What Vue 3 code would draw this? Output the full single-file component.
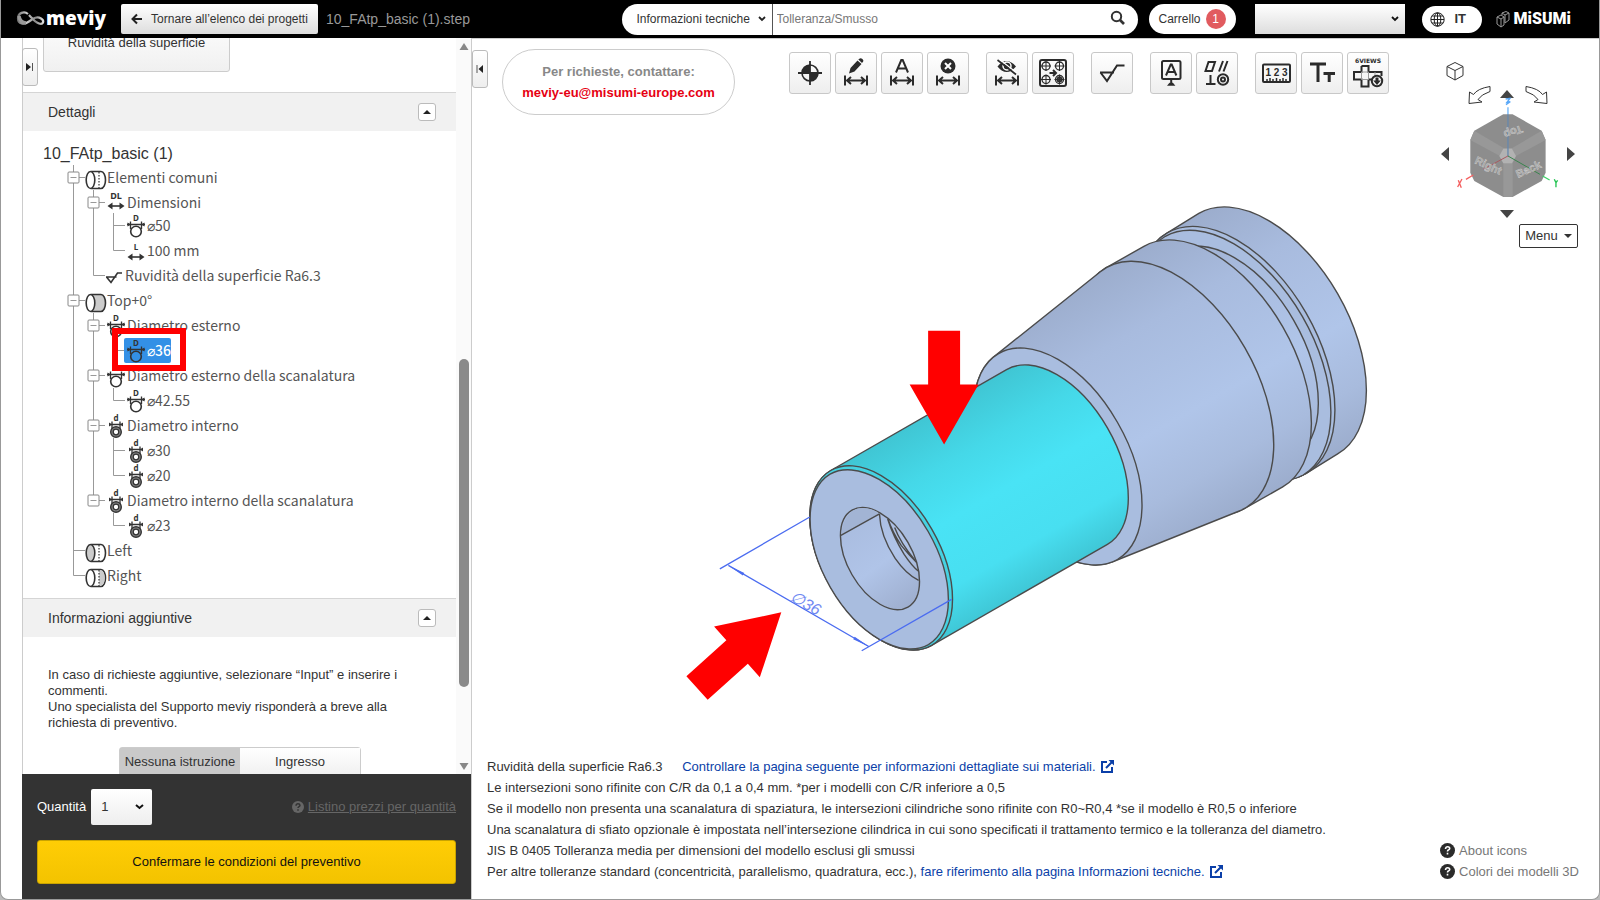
<script setup>
import { ref } from 'vue'

const category = ref('tech')
const quantity = ref('1')
const query = ref('')

/* ---- toolbar ---- */
const dim = '<path d="M10 23.5v10M32 23.5v10M12 28.5h18M16 25l-4 3.5 4 3.5M26 25l4 3.5-4 3.5"/>'
const letterA = '<path d="M15 20.500L20.300 8h1.400L27 20.500M17 16.500h8"/>'
const target = (x, y) => `<circle cx="${x}" cy="${y}" r="4" stroke-width="1.300"/><path stroke-width="1" d="M${x - 5} ${y}h10M${x} ${y - 5}v10"/>`
const toolGroups = [
  [
    { name: 'Origine', art: '<circle cx="21" cy="21" r="8" stroke-width="1.600"/><path d="M21 9v24M9 21h24" stroke-width="1.800"/><path fill="#2b2b2b" stroke="none" d="M21 21v-8a8 8 0 0 0-8 8zM21 21v8a8 8 0 0 0 8-8z"/>' },
    { name: 'Modifica quota', art: dim + '<path fill="#2b2b2b" stroke="none" d="M14 21.500l1.500-5.500 7-7.500 4 3.500-7 7.500zM23.300 7.600l1.500-1.200q1.200-.6 2.600.5 1.500 1.300.8 2.700l-1.200 1.500z"/>' },
    { name: 'Testo quota', art: dim + letterA },
    { name: 'Elimina quota', art: dim + '<circle cx="21" cy="14" r="7.500" fill="#2b2b2b" stroke="none"/><path stroke="#fff" d="M18 11l6 6M24 11l-6 6"/>' },
  ],
  [
    { name: 'Nascondi quota', art: dim + '<path fill="#2b2b2b" stroke="none" d="M11.500 14.500q9-11 18.500 0-9.500 11-18.500 0z"/><circle cx="21" cy="14" r="4" stroke="#fff" stroke-width="1.500"/><path stroke="#fff" stroke-width="1.300" d="M13.500 7.500L31 21"/><path stroke-width="1.600" d="M11.500 8L30 22.500"/>' },
    { name: 'Raggruppa fori', art: '<rect x="8" y="8" width="26" height="26" rx="2"/>' + target(14, 14) + target(27.5, 14) + target(14, 27.5) + target(27.5, 27.5) + '<circle cx="27.500" cy="27.500" r="2" /><path d="M17.500 21h6M21 18l3 3-3 3"/>' },
  ],
  [{ name: 'Rugosità', art: '<path d="M9 20.500h14M9.500 20.500l6.500 8.500 10-15.500h7.500"/>' }],
  [
    { name: 'Annotazione', art: '<rect x="12" y="9" width="18.500" height="18" rx="1.500"/><path d="M16 23.500l4.700-11h1l4.700 11M17.500 20h7.500M21.200 27v6"/><path fill="#2b2b2b" stroke="none" d="M17 33.800l2.500-3h3.400l2.500 3z"/>' },
    { name: 'Tolleranze geometriche', art: '<path d="M12.500 10h6.500l-3 9h-6.500zM27 9l-4 10.500M31.500 9l-4 10.500M14.500 23v9M10 32h9.500"/><circle cx="27" cy="27.500" r="5.200"/><circle cx="27" cy="27.500" r="2"/>' },
  ],
  [
    { name: 'Misura', art: '<rect x="8" y="12.500" width="27" height="17.500" rx="1"/><path stroke-width="1.500" d="M12 30v-3M15 30v-4M18 30v-3M21.500 30v-4M25 30v-3M28 30v-4M31 30v-3"/><text x="21.500" y="24" text-anchor="middle" font-size="10" font-weight="700" font-family="Liberation Sans, sans-serif" fill="#2b2b2b" stroke="none">1 2 3</text>' },
    { name: 'Dimensione testo', art: '<path stroke-width="3" d="M9 12h16M17 12v18"/><path stroke-width="3" d="M22.500 21.500h11.500M28.200 21.500V30"/>' },
    { name: 'Sei viste', art: '<text x="21" y="11" text-anchor="middle" font-size="6" font-weight="700" font-family="DejaVu Sans, sans-serif" fill="#2b2b2b" stroke="none">6VIEWS</text><path d="M14.500 14h7v6h13v4M14.500 14v6H7v7.500h7.500V34.500h7V27.500M21.500 27.500h3"/><path stroke="#999" stroke-width="1" d="M14.500 20h7v7.500h-7zM28 20v4"/><circle cx="30" cy="29" r="5.200" fill="#f6f6f6"/><path fill="#2b2b2b" stroke="none" d="M28.500 25.500h3v3h2.300L30 33l-3.800-4.500h2.300z"/>' },
  ],
]

/* ---- feature tree ---- */
const barrel = (left, right, inner) => `<path d="M6 6.500h10c2.700 0 4.500 4 4.500 8.500s-1.800 8.500-4.500 8.500H6" fill="${right}"/><ellipse cx="5.500" cy="15" rx="4.300" ry="8.500" fill="${left}"/>${inner}`
const dash = '<path stroke-dasharray="1.500 1.500" stroke-width="1.200" d="M14 7v16"/>'
const cap = (t, y = 8, size = 8) => `<text x="11" y="${y}" text-anchor="middle" font-size="${size}" font-weight="700" font-family="Noto Sans, sans-serif" fill="#333" stroke="none">${t}</text>`
const gauge = '<path stroke-width="1.300" d="M2 11.500h18M5.500 8.500V16M16.500 8.500V16"/><path fill="#333" stroke="none" d="M6 11.500l-3.500-2v4zM16 11.500l3.500-2v4z"/>'
const hArrow = (y) => `<path d="M5 ${y}h12"/><path fill="#333" stroke="none" d="M2.500 ${y}l5-3.500v7zM19.500 ${y}l-5-3.500v7z"/>`
const glyphs = {
  common: barrel('#fff', '#fff', dash),
  top: barrel('#fff', '#ccc', ''),
  left: barrel('#ccc', '#fff', dash),
  right: barrel('#fff', '#fff', '<path fill="#ccc" stroke="none" d="M14 7.500h2c2.500 0 3.700 4 3.700 7.500s-1.200 7.500-3.700 7.500h-2z"/>' + dash),
  dl: cap('DL', 9, 9) + hArrow(16),
  outer: cap('D') + gauge + '<circle cx="11" cy="18.500" r="5.300" stroke-width="1.600"/>',
  inner: cap('d') + '<path stroke-width="1.300" d="M4 11.500h14M7 8.500V16M15 8.500V16"/><path fill="#333" stroke="none" d="M7 11.500l-3-2v4zM15 11.500l3-2v4z"/><circle cx="11" cy="19" r="4" stroke="#888" stroke-width="2.500"/><circle cx="11" cy="19" r="5.300" stroke-width="1.400"/><circle cx="11" cy="19" r="2.800" stroke-width="1.300"/>',
  length: cap('L', 12) + hArrow(19),
  rough: '<path d="M1 14h10.500M1.500 14l4.500 5.500L12.500 10h4.500"/>',
}
const rows = [
  { g: '+', box: true, icon: 'common', label: 'Elementi comuni' },
  { g: '|+', box: true, icon: 'dl', label: 'Dimensioni', short: true },
  { g: '||+', icon: 'outer', label: '⌀50' },
  { g: '||L', icon: 'length', label: '100 mm' },
  { g: '|L', icon: 'rough', label: 'Ruvidità della superficie Ra6.3', narrow: true },
  { g: '+', box: true, icon: 'top', label: 'Top+0°' },
  { g: '|+', box: true, icon: 'outer', label: 'Diametro esterno' },
  { g: '||L', icon: 'outer', label: '⌀36', selected: true },
  { g: '|+', box: true, icon: 'outer', label: 'Diametro esterno della scanalatura' },
  { g: '||L', icon: 'outer', label: '⌀42.55' },
  { g: '|+', box: true, icon: 'inner', label: 'Diametro interno' },
  { g: '||+', icon: 'inner', label: '⌀30' },
  { g: '||L', icon: 'inner', label: '⌀20' },
  { g: '|L', box: true, icon: 'inner', label: 'Diametro interno della scanalatura' },
  { g: '| L', icon: 'inner', label: '⌀23' },
  { g: '+', icon: 'left', label: 'Left' },
  { g: 'L', icon: 'right', label: 'Right' },
]
function guides(row) {
  let d = ''
  for (let i = 0; i < row.g.length; i++) {
    const x = i * 20 + 9.5
    const c = row.g[i]
    if (c === '|' || c === '+') d += `M${x} 0V25`
    if (c === 'L') d += `M${x} 0V12.5`
    if (c === '+' || c === 'L') d += `M${x} 12.5h11.5`
  }
  return d
}

/* ---- model geometry: circles seen in isometric projection ---- */
const K = 0.577
const COS = 0.5
const SIN = 0.866
const toScreen = (c, u, v) => `${(c[0] + u * SIN + v * COS).toFixed(1)} ${(c[1] - u * COS + v * SIN).toFixed(1)}`
function solid(c1, r1, c2, r2) {
  const d = Math.hypot(c2[0] - c1[0], c2[1] - c1[1]) / K
  const s = (r1 - r2) / d
  const c = Math.sqrt(1 - s * s)
  const p = (o, r, side) => toScreen(o, r * K * s, side * r * c)
  const arc = (r, large) => `A${r} ${(r * K).toFixed(1)} 60 ${large ? 1 : 0} 1 `
  return `M${p(c1, r1, -1)}L${p(c2, r2, -1)}${arc(r2, r2 > r1)}${p(c2, r2, 1)}L${p(c1, r1, 1)}${arc(r1, r1 > r2)}${p(c1, r1, -1)}Z`
}
const disc = (c, r) => `M${toScreen(c, 0, -r)}A${r} ${r * K} 60 0 1 ${toScreen(c, 0, r)}A${r} ${r * K} 60 0 1 ${toScreen(c, 0, -r)}Z`
const parts = [
  { d: solid([1237, 352.5], 139, [1268.5, 333], 139), fill: 'url(#steel)' },
  { d: disc([1237, 352.5], 139), fill: '#a9bddf' },
  { d: disc([1234.5, 355], 138), fill: '#a9bddf' },
  { d: solid([1213.5, 366], 119, [1234.5, 354], 119), fill: 'url(#steel)' },
  { d: solid([1175.5, 387.5], 139, [1213.5, 366], 139), fill: 'url(#steel)' },
  { d: solid([1058, 456], 119, [1175.5, 387.5], 139), fill: 'url(#steel)' },
  { d: disc([1058, 456], 119), fill: '#a9bddf' },
  { d: solid([881, 557.5], 101, [1057, 456.5], 101), fill: 'url(#cyan)' },
  { d: disc([881, 557.5], 101), fill: '#45d2e2' },
  { d: disc([879, 559], 98.5), fill: '#a9bddf' },
  { d: disc([879.8, 558.2], 56), fill: 'url(#bore)' },
]
</script>

<template>
  <div class="app">
    <header class="top">
      <div class="brand">
        <svg width="30" height="20" viewBox="0 0 30 20" fill="none">
          <defs><linearGradient id="loop"><stop offset="0" stop-color="#777" /><stop offset=".35" stop-color="#ccc" /><stop offset=".7" stop-color="#888" /><stop offset="1" stop-color="#ddd" /></linearGradient></defs>
          <path d="M12 5C8 1.500 2 4 2 9.500S8 16 13 12.500 21 7 25 9.500 27 16 23 14.500 17 10 13 6" stroke="url(#loop)" stroke-width="2.200" />
          <path d="M3 7q1 6.500 7 7" stroke="#999" stroke-width="3.400" />
        </svg>
        <span>meviy</span>
      </div>
      <button class="back" type="button">
        <svg width="12" height="12" viewBox="0 0 12 12"><path d="M11 6H2M6 1.500L1.500 6 6 10.500" fill="none" stroke="#222" stroke-width="2" /></svg>
        Tornare all’elenco dei progetti
      </button>
      <span class="file">10_FAtp_basic (1).step</span>
      <form class="search" @submit.prevent>
        <div class="pick">
          <select v-model="category" aria-label="Categoria"><option value="tech">Informazioni tecniche</option></select>
          <svg width="8" height="6" viewBox="0 0 8 6"><path d="M1 1l3 3 3-3" fill="none" stroke="#222" stroke-width="1.800" /></svg>
        </div>
        <input v-model="query" type="text" placeholder="Tolleranza/Smusso" aria-label="Cerca">
        <button type="submit" aria-label="Cerca">
          <svg width="16" height="16" viewBox="0 0 16 16" fill="none" stroke="#333"><circle cx="6.500" cy="6.500" r="4.700" stroke-width="2" /><path d="M10 10l4 4" stroke-width="2.600" /></svg>
        </button>
      </form>
      <button class="cart" type="button">Carrello <b>1</b></button>
      <div class="pick account">
        <select aria-label="Account"><option></option></select>
        <svg width="8" height="6" viewBox="0 0 8 6"><path d="M1 1l3 3 3-3" fill="none" stroke="#111" stroke-width="1.800" /></svg>
      </div>
      <button class="lang" type="button">
        <svg width="15" height="15" viewBox="0 0 15 15" fill="none" stroke="#222" stroke-width="1"><circle cx="7.500" cy="7.500" r="6.700" /><ellipse cx="7.500" cy="7.500" rx="3.300" ry="6.700" /><path d="M7.500 1v13M1 7.500h13M2 4h11M2 11h11" /></svg>
        IT
      </button>
      <div class="misumi">
        <svg width="14" height="17" viewBox="0 0 14 17" fill="none" stroke="#999" stroke-width="1"><path d="M1 6l4-2 3 2v8l-3 2-4-3zM1 6l4 2 3-2M5 8v8M6 4V2l4-1.500 3 1.500v7l-4 3M9 4l4-2M6 2l3 2v8" /></svg>
        <span>MiSUMi</span>
      </div>
    </header>

    <main class="work">
      <aside class="side">
        <button class="tab tab-left" type="button" aria-label="Espandi">
          <svg width="8" height="8" viewBox="0 0 8 8"><path d="M0 0l5 4-5 4z" fill="#222" /><path d="M6.500 0v8" stroke="#555" /></svg>
        </button>
        <div class="scroll">
          <div class="content">
            <div class="lead"><button type="button">Ruvidità della superficie</button></div>
            <section>
              <h2>Dettagli <button type="button" aria-label="Comprimi Dettagli"><svg width="8" height="4" viewBox="0 0 8 4"><path d="M0 4l4-4 4 4z" fill="#222" /></svg></button></h2>
              <div class="tree">
                <div class="root">10_FAtp_basic (1)</div>
                <ul>
                  <li v-for="(row, i) in rows" :key="i" :class="{ selected: row.selected, short: row.short }">
                    <svg :class="'gutter g' + row.g.length" height="25" fill="none" stroke="#999">
                      <path :d="guides(row)" />
                      <g v-if="row.box" :class="'b' + row.g.length">
                        <rect x="4" y="7" width="11" height="11" rx="1" fill="#fff" stroke="#888" /><path d="M6.500 12.500h6" />
                      </g>
                    </svg>
                    <span class="node">
                      <svg class="glyph" :class="{ narrow: row.narrow }" height="25" fill="none" stroke="#333" stroke-width="1.600" v-html="glyphs[row.icon]"></svg>
                      <span>{{ row.label }}</span>
                    </span>
                  </li>
                </ul>
              </div>
            </section>
            <section>
              <h2>Informazioni aggiuntive <button type="button" aria-label="Comprimi Informazioni aggiuntive"><svg width="8" height="4" viewBox="0 0 8 4"><path d="M0 4l4-4 4 4z" fill="#222" /></svg></button></h2>
              <p>In caso di richieste aggiuntive, selezionare “Input” e inserire i commenti.<br>Uno specialista del Supporto meviy risponderà a breve alla richiesta di preventivo.</p>
              <div class="segment"><button class="on" type="button">Nessuna istruzione</button><button type="button">Ingresso</button></div>
            </section>
          </div>
          <div class="bar">
            <svg width="10" height="7" viewBox="0 0 10 7"><path d="M5 0l4.500 7h-9z" fill="#888" /></svg>
            <div class="rail"><div class="thumb"></div></div>
            <svg width="10" height="7" viewBox="0 0 10 7"><path d="M5 7L.5 0h9z" fill="#888" /></svg>
          </div>
        </div>
        <div class="order">
          <div class="qty">
            <label for="qty">Quantità</label>
            <div class="pick">
              <select id="qty" v-model="quantity"><option>1</option></select>
              <svg width="9" height="6" viewBox="0 0 9 6"><path d="M1 1l3.500 3L8 1" fill="none" stroke="#111" stroke-width="2" /></svg>
            </div>
            <svg class="help" width="12" height="12" viewBox="0 0 12 12"><circle cx="6" cy="6" r="6" fill="#666" /><path d="M4 4.700q.2-2 2-2t2 1.600q0 1-1.200 1.500Q6 6.200 6 7M6 8.200v1.500" fill="none" stroke="#333" stroke-width="1.500" /></svg>
            <a href="#">Listino prezzi per quantità</a>
          </div>
          <button class="confirm" type="button">Confermare le condizioni del preventivo</button>
        </div>
      </aside>

      <section class="viewer">
        <button class="tab tab-right" type="button" aria-label="Comprimi">
          <svg width="8" height="8" viewBox="0 0 8 8"><path d="M7 0L2.500 4 7 8z" fill="#222" /><path d="M1 0v8" stroke="#555" /></svg>
        </button>

        <svg class="model" viewBox="472 38 1127 861" fill="none">
          <defs>
            <linearGradient id="steel" gradientUnits="userSpaceOnUse" x1="1106" y1="267" x2="1245" y2="508">
              <stop offset="0" stop-color="#9cadcd" /><stop offset=".25" stop-color="#a8bbde" /><stop offset=".6" stop-color="#b0c5e9" /><stop offset=".82" stop-color="#a8bbdd" /><stop offset="1" stop-color="#9cadcd" />
            </linearGradient>
            <linearGradient id="cyan" gradientUnits="userSpaceOnUse" x1="919" y1="420" x2="1020" y2="595">
              <stop offset="0" stop-color="#40c6d4" /><stop offset=".25" stop-color="#45d8e8" /><stop offset=".5" stop-color="#49e3f5" /><stop offset=".8" stop-color="#48dff1" /><stop offset="1" stop-color="#3fc7d6" />
            </linearGradient>
            <linearGradient id="bore" gradientUnits="userSpaceOnUse" x1="848" y1="520" x2="912" y2="608">
              <stop offset="0" stop-color="#a9bcdf" /><stop offset=".5" stop-color="#b0c4e8" /><stop offset="1" stop-color="#9dadcd" />
            </linearGradient>
          </defs>
          <g stroke="#4b4b4b" stroke-width="1.400" stroke-linejoin="round">
            <path v-for="(part, i) in parts" :key="i" :d="part.d" :fill="part.fill" />
            <path d="M841 534.500Q843 514 856 508.500Q868 505 879 513Z" fill="#a2b4d4" stroke="none" />
            <path d="M840.700 535L879.300 513.500M879.300 513.500Q880 535 895 558Q906 574 918.500 580M887.500 518.500Q893 536 904 554Q912 566 918 570.500M888 519Q892 531 901 545Q909 555 916.500 562M894.500 527Q900 542 915 560" />
          </g>
          <g stroke="#4b6cf0" stroke-width="1.300">
            <path d="M719.500 568.500L809.500 516.500M728 565L869 646.500M861.500 650.500L951.500 599" />
            <path fill="#4b6cf0" stroke="none" d="M728 565l16 7.500-1.500 2.500zM869 646.500l-16-7.500 1.500-2.500z" />
          </g>
          <text x="0" y="0" transform="translate(789 600) rotate(29)" class="dia">∅36</text>
          <path fill="#f00" d="M928 330h32v54h18.500L944 444l-34.500-60H928zM781 612l-21.500 65-12-13.500-40.200 36L686 676l40-36-12.300-13.700z" />
        </svg>

        <div class="contact">
          <span>Per richieste, contattare:</span>
          <a href="mailto:meviy-eu@misumi-europe.com">meviy-eu@misumi-europe.com</a>
        </div>

        <div class="tools">
          <div v-for="(group, gi) in toolGroups" :key="gi" class="group">
            <button v-for="tool in group" :key="tool.name" type="button" :aria-label="tool.name">
              <svg width="42" height="42" viewBox="0 0 42 42" fill="none" stroke="#2b2b2b" stroke-width="2" v-html="tool.art"></svg>
            </button>
          </div>
        </div>

        <div class="orient">
          <svg width="150" height="166" viewBox="1435 58 150 166" fill="none">
            <path d="M1455 62.500l8 4v9l-8 4.500-8-4.500v-9zM1447 66.500l8 4 8-4M1455 70.500V80" stroke="#333" />
            <path d="M1490 86.500v5q-9 3-12 8l4 2.500-13 1.500.5-11.500 4 2.500q4-6 16.500-8zM1526 86.500v5q9 3 12 8l-4 2.500 13 1.500-.5-11.500-4 2.500q-4-6-16.500-8z" stroke="#333" />
            <path fill="#444" d="M1507 90l7 8h-14zM1507 218l7-8h-14zM1441 154l8-7v14zM1575 154l-8-7v14z" />
            <g transform="translate(1140 0) scale(.3333)">
              <path d="M1090 343h28l87 49 12 28v98l-12 25-87 48h-28l-87-48-12-25v-98l12-28z" fill="#8d8d8d" />
              <path d="M1003 392l88 52h26l88-52 12 28-89 48v0l-10 22v101h-28V490l-10-22-89-48z" fill="#989898" />
              <path d="M1090 446h26l12 22-12 22h-26l-12-22z" fill="#b2b2b2" />
              <path d="M1104 322V343" stroke="#6fb4f8" stroke-width="4" /><path d="M1104 343V468" stroke="#6888ac" stroke-width="4" />
              <path d="M1104 468L1030 508" stroke="#a95960" stroke-width="3" /><path d="M1000 525L978 538" stroke="#f45f5f" stroke-width="4" />
              <path d="M1104 468L1200 523" stroke="#39844d" stroke-width="3" /><path d="M1208 528L1229 540" stroke="#3bcf66" stroke-width="4" />
              <path d="M1097 297l13-2-9 12 10-2-13 9" stroke="#59a8f8" stroke-width="4" />
              <path d="M955 541l9 22M966 537l-13 24" stroke="#f45f5f" stroke-width="4" />
              <path d="M1243 538l5 10 5-7M1248 548v14" stroke="#22c351" stroke-width="4" />
            </g>
            <g class="faces"><text transform="translate(1521 125) rotate(160)">Top</text><text transform="translate(1474 163) rotate(25)">Right</text><text transform="translate(1518 178) rotate(-24)">Back</text></g>
          </svg>
          <button type="button">Menu <svg width="8" height="4" viewBox="0 0 8 4"><path d="M0 0h8L4 4z" fill="#333" /></svg></button>
        </div>

        <footer class="foot">
          <div class="notes">
            <div>Ruvidità della superficie Ra6.3 <a class="first" href="#">Controllare la pagina seguente per informazioni dettagliate sui materiali. <svg width="13" height="13" viewBox="0 0 13 13"><path d="M6 2H1v10h10V7M5 8l6-6" fill="none" stroke="#0b3fa8" stroke-width="2" /><path d="M7.500 0H13v5.500z" fill="#0b3fa8" /></svg></a></div>
            <div>Le intersezioni sono rifinite con C/R da 0,1 a 0,4 mm. *per i modelli con C/R inferiore a 0,5</div>
            <div>Se il modello non presenta una scanalatura di spaziatura, le intersezioni cilindriche sono rifinite con R0~R0,4 *se il modello è R0,5 o inferiore</div>
            <div>Una scanalatura di sfiato opzionale è impostata nell’intersezione cilindrica in cui sono specificati il trattamento termico e la tolleranza del diametro.</div>
            <div>JIS B 0405 Tolleranza media per dimensioni del modello esclusi gli smussi</div>
            <div>Per altre tolleranze standard (concentricità, parallelismo, quadratura, ecc.), <a href="#">fare riferimento alla pagina Informazioni tecniche. <svg width="13" height="13" viewBox="0 0 13 13"><path d="M6 2H1v10h10V7M5 8l6-6" fill="none" stroke="#0b3fa8" stroke-width="2" /><path d="M7.500 0H13v5.500z" fill="#0b3fa8" /></svg></a></div>
          </div>
          <div class="links">
            <a v-for="text in ['About icons', 'Colori dei modelli 3D']" :key="text" href="#">
              <svg width="15" height="15" viewBox="0 0 15 15"><circle cx="7.500" cy="7.500" r="7.500" fill="#2b2b2b" /><path d="M5.500 6q.2-2.200 2.200-2.200t2 1.700q0 1-1.300 1.500-.9.400-.9 1.500M7.500 9.700v1.800" fill="none" stroke="#fff" stroke-width="1.600" /></svg>
              {{ text }}
            </a>
          </div>
        </footer>
      </section>
    </main>
  </div>
</template>

<style>
body { margin: 0; background: #bbb; }
</style>

<style scoped>
.app { box-sizing: border-box; height: 100vh; display: flex; flex-direction: column; overflow: hidden; background: #fff; border: 1px solid #999; border-top: 0; border-radius: 0 0 8px 8px; font: 13px/16px "Liberation Sans", Arial, sans-serif; color: #333; }
button, select, input { font: inherit; color: inherit; box-sizing: border-box; margin: 0; padding: 0; border: 0; border-radius: 0; background: none; }
svg { flex: none; }
a { text-decoration: none; }

.top { flex: none; height: 38px; display: flex; align-items: center; background: #000; font-size: 12px; }
.brand { width: 105px; margin-left: 15px; display: flex; align-items: center; color: #fff; font: 800 19px/30px "Open Sans", sans-serif; }
.brand span { margin-top: -2px; }
.back { height: 30px; width: 197px; display: flex; align-items: center; justify-content: center; gap: 8px; border-radius: 2px; background: linear-gradient(#fff, #ddd); white-space: nowrap; }
.file { margin-left: 8px; font-size: 14px; color: #999; white-space: nowrap; }
.pick { position: relative; }
.pick select { width: 100%; height: 100%; appearance: none; }
.pick svg { position: absolute; right: 6px; top: 50%; margin-top: -3px; pointer-events: none; }
.search { flex: none; margin-left: auto; width: 516px; height: 31px; display: flex; background: #fff; border-radius: 16px; overflow: hidden; }
.search .pick { width: 150px; border-right: 1px solid #555; }
.search select { padding-left: 15px; }
.search input { flex: 1; padding-left: 4px; outline: 0; }
.search input::placeholder { color: #777; opacity: 1; }
.search > button { width: 40px; display: flex; align-items: center; justify-content: center; padding-bottom: 3px; }
.cart { margin-left: 11px; width: 87px; height: 30px; display: flex; align-items: center; justify-content: center; gap: 5px; border-radius: 15px; background: #fff; }
.cart b { width: 20px; line-height: 20px; border-radius: 10px; background: #e15b5f; color: #fff; font-weight: 400; }
.account { margin-left: 19px; width: 150px; height: 30px; background: linear-gradient(#fff, #ddd); }
.lang { margin-left: 17px; width: 60px; height: 27px; display: flex; align-items: center; gap: 10px; padding-left: 8px; border-radius: 14px; background: #fff; font-size: 13px; font-weight: 700; }
.misumi { margin: 0 28px 0 14px; display: flex; align-items: center; gap: 4px; color: #fff; font: 900 16px/20px Roboto, sans-serif; }

.work { flex: 1; min-height: 0; display: flex; }
.side { position: relative; flex: none; box-sizing: border-box; width: 450px; margin-left: 21px; display: flex; flex-direction: column; border-left: 1px solid #ccc; border-right: 1px solid #ccc; }
.scroll { flex: 1; min-height: 0; display: flex; overflow: hidden; }
.content { flex: 1; min-width: 0; }
.bar { width: 15px; display: flex; flex-direction: column; align-items: center; padding: 5px 0 4px; box-sizing: border-box; background: #fafafa; }
.rail { flex: 1; width: 10px; display: flex; flex-direction: column; justify-content: flex-end; }
.thumb { height: 46%; margin-bottom: 76px; border-radius: 5px; background: #8a8a8a; }
.tab { position: absolute; z-index: 2; width: 16px; height: 38px; display: flex; align-items: center; justify-content: center; border: 1px solid #bbb; border-radius: 3px; background: linear-gradient(#fff, #eee); }
.tab-left { left: -1px; top: 10px; }
.tab-right { left: 0; top: 11px; }
.lead { padding: 0 0 20px 20px; margin-top: -24px; }
.lead button { display: block; width: 187px; height: 58px; border: 1px solid #ccc; border-radius: 3px; background: linear-gradient(#fff, #f0f0f0); }
h2 { margin: 0; height: 39px; box-sizing: border-box; padding: 0 20px 0 25px; display: flex; align-items: center; justify-content: space-between; border-top: 1px solid #d5d5d5; background: #f1f1f1; font-size: 14px; font-weight: 400; }
h2 button { width: 18px; height: 18px; display: flex; align-items: center; justify-content: center; border: 1px solid #bbb; border-radius: 3px; background: #fff; }
.tree { padding: 12px 0 10px; }
.root { padding-left: 20px; font-size: 16px; line-height: 22px; }
ul { list-style: none; margin: 0; padding: 0 0 0 41px; }
li { height: 25px; display: flex; white-space: nowrap; font: 14px/25px "Noto Sans CJK JP", "Noto Sans CJK SC", sans-serif; color: #555; }
li.short { height: 23px; }
.gutter { overflow: visible; }
.g1 { width: 20px; }
.g2 { width: 40px; }
.g3 { width: 60px; }
.b2 { transform: translate(20px, 0); }
.node { position: relative; display: flex; height: 25px; padding-left: 1px; }
.glyph { width: 22px; overflow: visible; }
.glyph.narrow { width: 20px; }
.selected .node { background: #3390e6; border-radius: 2px; color: #fff; font-weight: 500; }
.selected .node::after { content: ""; position: absolute; z-index: 1; left: -12px; top: -10px; width: 62px; height: 31px; border: 6px solid #f00; }
p { margin: 30px 50px 16px 25px; }
.segment { width: 242px; height: 30px; margin: 0 auto 0 96px; display: flex; box-sizing: border-box; border: 1px solid #ccc; border-radius: 3px; }
.segment button { flex: 1; white-space: nowrap; background: linear-gradient(#fff, #f0f0f0); }
.segment .on { background: #c9c9c9; }
.order { flex: none; padding: 15px; margin: 0 0 0 -1px; background: #333; }
.qty { display: flex; align-items: center; color: #fff; }
.qty .pick { width: 61px; height: 36px; margin-left: 5px; border-radius: 2px; background: linear-gradient(#fff, #eee); color: #333; }
.qty .pick select { padding-left: 10px; }
.qty .pick svg { right: 8px; }
.help { margin-left: auto; }
.qty a { margin-left: 4px; color: #666; text-decoration: underline; }
.confirm { width: 100%; height: 44px; margin-top: 15px; border: 1px solid #c9a300; border-radius: 3px; background: linear-gradient(#ffcd05, #f3c300); color: #111; }

.viewer { position: relative; flex: 1; min-width: 0; display: grid; grid-template-columns: auto 1fr auto; grid-template-rows: auto 1fr; box-sizing: border-box; border-top: 1px solid #ccc; }
.model { position: absolute; left: 0; top: 0; width: 100%; height: 100%; pointer-events: none; }
.dia { font: italic 16px "Liberation Sans", sans-serif; fill: #6f88f2; }
.contact { position: relative; align-self: start; width: 233px; height: 66px; margin: 10px 0 0 30px; box-sizing: border-box; display: flex; flex-direction: column; align-items: center; justify-content: center; gap: 5px; border: 1px solid #ccc; border-radius: 33px; font-weight: 700; color: #888; }
.contact a { color: #e60012; }
.tools { position: relative; justify-self: end; align-self: start; display: flex; gap: 17px; margin: 13px 46px 0 0; }
.group { display: flex; gap: 4px; }
.group button { width: 42px; height: 42px; border: 1px solid #c8c8c8; border-radius: 3px; background: linear-gradient(#fff, #eee); overflow: hidden; }
.group svg { display: block; margin: -1px; }
.orient { position: relative; display: flex; flex-direction: column; align-items: flex-end; margin: 19px 14px 0 0; }
.orient button { width: 59px; height: 24px; margin-right: 7px; display: flex; align-items: center; justify-content: center; gap: 6px; border: 1px solid #333; border-radius: 2px; background: #fff; }
.faces { font: 700 11px "Liberation Sans", sans-serif; fill: #a5a5a5; stroke: #ddd; stroke-width: 0.3px; }
.foot { position: relative; grid-column: 1 / -1; align-self: end; display: flex; justify-content: space-between; align-items: flex-end; padding: 0 20px 17px 15px; line-height: 21px; white-space: nowrap; }
.notes a { color: #0b3fa8; }
.notes .first { margin-left: 16px; }
.notes svg { vertical-align: -2px; margin-left: 2px; }
.links { display: flex; flex-direction: column; }
.links a { display: flex; align-items: center; gap: 4px; color: #777; }
</style>
